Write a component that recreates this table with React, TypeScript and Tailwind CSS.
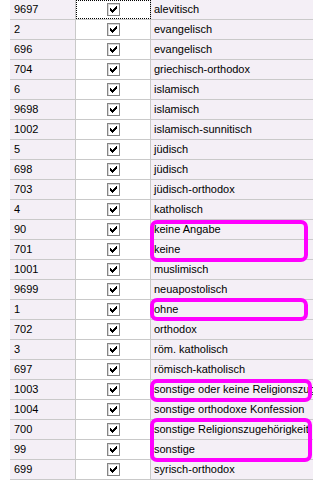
const ROWS: [string, string][] = [
  ['9697', 'alevitisch'],
  ['2', 'evangelisch'],
  ['696', 'evangelisch'],
  ['704', 'griechisch-orthodox'],
  ['6', 'islamisch'],
  ['9698', 'islamisch'],
  ['1002', 'islamisch-sunnitisch'],
  ['5', 'jüdisch'],
  ['698', 'jüdisch'],
  ['703', 'jüdisch-orthodox'],
  ['4', 'katholisch'],
  ['90', 'keine Angabe'],
  ['701', 'keine'],
  ['1001', 'muslimisch'],
  ['9699', 'neuapostolisch'],
  ['1', 'ohne'],
  ['702', 'orthodox'],
  ['3', 'röm. katholisch'],
  ['697', 'römisch-katholisch'],
  ['1003', 'sonstige oder keine Religionszugehörigkeit'],
  ['1004', 'sonstige orthodoxe Konfession'],
  ['700', 'sonstige Religionszugehörigkeit'],
  ['99', 'sonstige'],
  ['699', 'syrisch-orthodox'],
]

// Markierungen (magenta) über den Zeilen
const MARKS = [
  'left-[150px] top-[220px] w-[158px] h-[42px]',
  'left-[150px] top-[298px] w-[158px] h-[23px]',
  'left-[150px] top-[379px] w-[162px] h-[23px]',
  'left-[150px] top-[418px] w-[162px] h-[44px]',
]

function CheckBox() {
  return (
    <span className="flex h-[13px] w-[13px] items-center justify-center border border-[#858585] bg-white shadow-[inset_1px_1px_0_#d8d8d8]">
      <svg width="11" height="11" viewBox="0 0 11 11" shapeRendering="crispEdges">
        <path d="M2 4 H3 V5 H4 V6 H5 V5 H6 V4 H7 V3 H8 V2 H9 V5 H8 V6 H7 V7 H6 V8 H5 V9 H4 V8 H3 V7 H2 Z" fill="#000" />
      </svg>
    </span>
  )
}

export default function App() {
  return (
    <div
      className="relative flex h-[481px] w-[313px] overflow-hidden bg-white text-[11px] text-black"
      style={{ fontFamily: '"Liberation Sans", Arial, sans-serif' }}
    >
      <div className="ml-[4px] w-[2px] bg-[#0078d7]" />
      <div className="ml-[6px] flex flex-1 flex-col border-r-2 border-[#bdbdbd]">
        {ROWS.map(([id, name], i) => (
          <div key={id} className="flex h-[20px] shrink-0 border-b border-[#c9c9c9]">
            <div className="flex w-[66px] items-center border-r border-[#c9c9c9] bg-[#f4eff6] pl-[4px]">
              {id}
            </div>
            <div
              className={`flex w-[75px] items-center justify-center border-r border-[#c9c9c9] bg-white ${
                i === 0 ? 'outline-1 -outline-offset-1 outline-dotted outline-black' : ''
              }`}
            >
              <CheckBox />
            </div>
            <div className="flex flex-1 items-center overflow-hidden whitespace-nowrap bg-[#f4eff6] pl-[3px]">
              {name}
            </div>
          </div>
        ))}
      </div>
      {MARKS.map((m) => (
        <div key={m} className={`pointer-events-none absolute rounded-[7px] border-4 border-[#ff00ff] ${m}`} />
      ))}
    </div>
  )
}
